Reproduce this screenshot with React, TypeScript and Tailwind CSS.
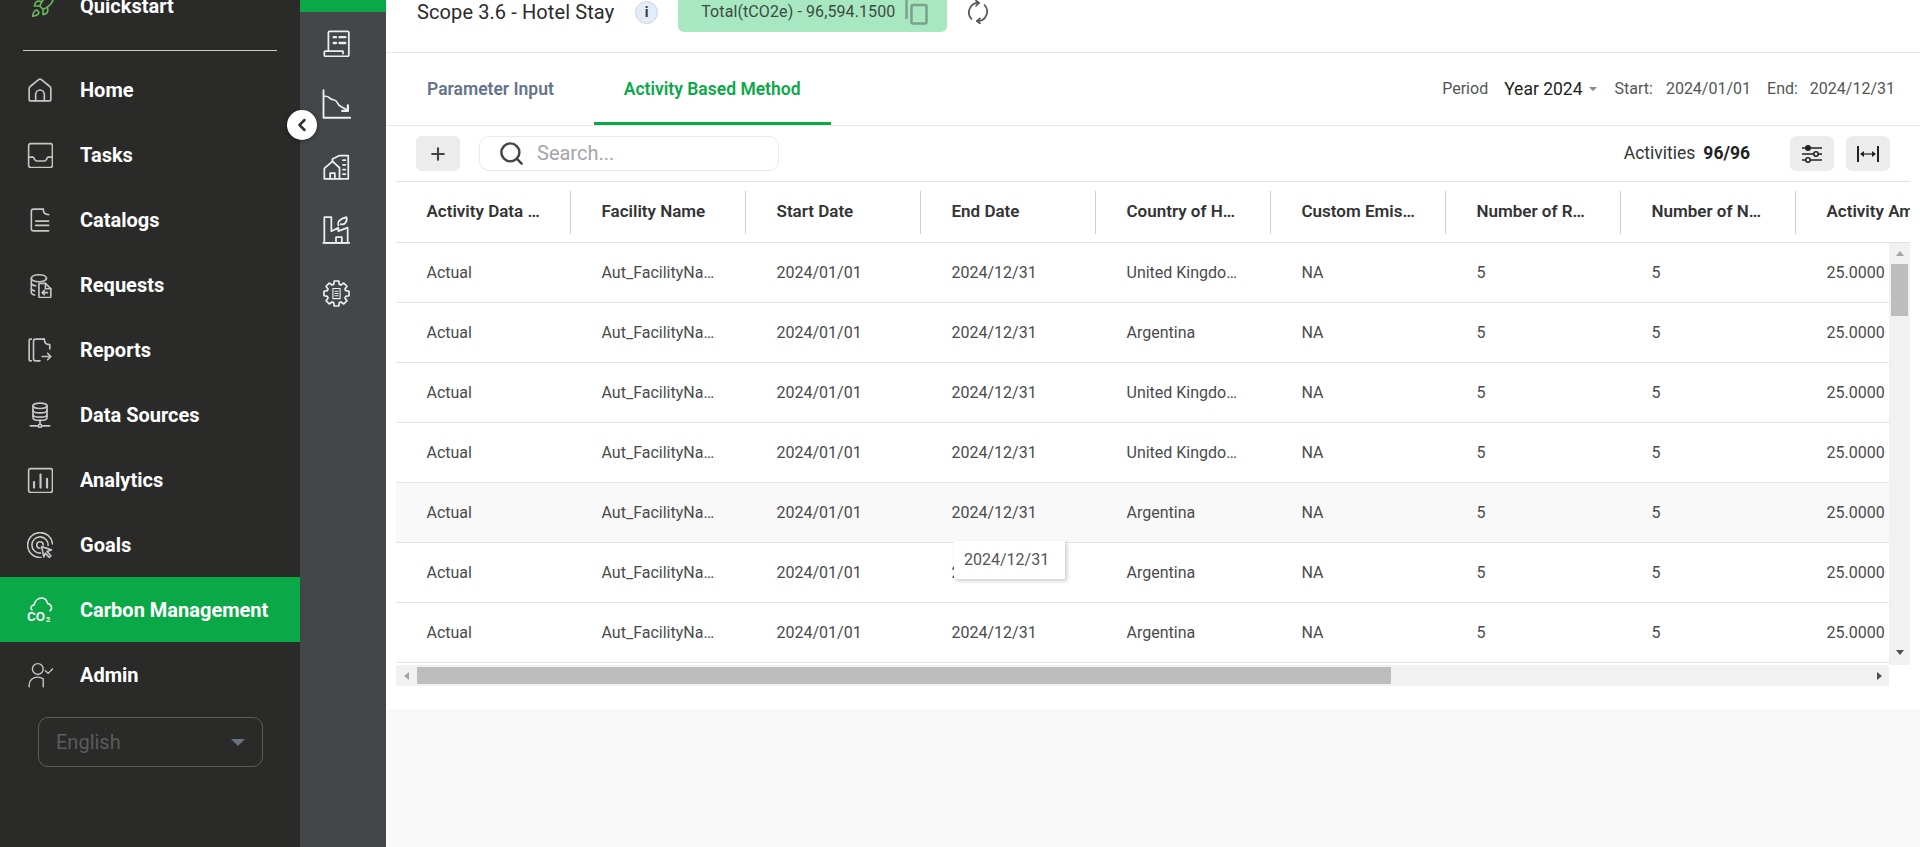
import React from 'react';
import { Rocket, Search, Plus } from 'lucide-react';

const Svg: React.FC<{ size?: number; children: React.ReactNode; sw?: number }> = ({ size = 26, children, sw = 1.5 }) => (
  <svg width={size} height={size} viewBox="0 0 24 24" fill="none" stroke="currentColor" strokeWidth={sw} strokeLinecap="round" strokeLinejoin="round">
    {children}
  </svg>
);

const HomeIcon = () => (
  <Svg><path d="M2 21V10.5c0-.6.3-1.1.7-1.5L11 2.3c.6-.4 1.4-.4 2 0L21.300 9c.4.4.7.9.7 1.500V21a1 1 0 0 1-1 1H3a1 1 0 0 1-1-1z" /><path d="M8 22v-6a4 4 0 0 1 8 0v6" /></Svg>
);
const TasksIcon = () => (
  <Svg><rect x="1.500" y="1.500" width="22" height="22" rx="2" /><path d="M1.500 14h4c.8 0 1 1 1.500 2s1 1.500 2 1.500h7c1 0 1.500-.5 2-1.500s.7-2 1.500-2h4" /></Svg>
);
const CatalogIcon = () => (
  <Svg><path d="M15 2H6a2 2 0 0 0-2 2v16a2 2 0 0 0 2 2h14" /><path d="M15 2c0 3 1.500 5 5 5" /><path d="M8 13h12M8 17h12" /></Svg>
);
const RequestsIcon = () => (
  <Svg>
    <path d="M4 6c0-2 3-3.500 7-3.500S18 4 18 6" /><path d="M4 6c0 1.500 3 3 7 3s7-1.500 7-3" /><path d="M4 6v13c0 1 1 1.700 3 2.300" /><path d="M4 11c1 1 2 1.500 4 1.800M4 16c1 .8 2 1.200 3 1.400" />
    <path d="M11 10.500h6l5 5v7a1 1 0 0 1-1 1h-9a1 1 0 0 1-1-1z" /><path d="M17 10.500v5h5M19 19h-5l2-2M14 19l2 2" />
  </Svg>
);
const ReportsIcon = () => (
  <Svg>
    <path d="M4 2H3a1 1 0 0 0-1 1v18a1 1 0 0 0 1 1h1" /><path d="M16 2H8a2 2 0 0 0-2 2v16a2 2 0 0 0 2 2h4" /><path d="M16 2c0 3 1.500 5 5 5v4" /><path d="M14 18h8M19 15l3 3-3 3" />
  </Svg>
);
const DataIcon = () => (
  <Svg>
    <ellipse cx="12" cy="3.500" rx="6.500" ry="2.500" /><path d="M5.500 3.500v11c0 1.500 3 2.500 6.500 2.500s6.500-1 6.500-2.500v-11" /><path d="M5.500 7.500c0 1.500 3 2.500 6.500 2.500s6.500-1 6.500-2.500M5.500 11.500c0 1.500 3 2.500 6.500 2.500s6.500-1 6.500-2.500" />
    <path d="M12 17v3M3 22h7M14 22h7" /><circle cx="12" cy="22" r="1.500" />
  </Svg>
);
const AnalyticsIcon = () => (
  <Svg><rect x="1.500" y="1.500" width="22" height="22" rx="2" /><path d="M6.500 19v-5M12.500 19V7M18.500 19v-8" strokeWidth={2} /></Svg>
);
const GoalsIcon = () => (
  <Svg>
    <path d="M13 23.500A11.500 11.500 0 1 1 23.500 11" /><path d="M12.500 19.500a7.500 7.500 0 1 1 7-7" /><path d="M12 15a3 3 0 1 1 3-3" />
    <path d="M13.500 13.500l9 3-4 1.500 3.500 4-1.500 1.500-3.500-4-1.500 3.500z" />
  </Svg>
);
const CarbonIcon = () => (
  <svg width="26" height="26" viewBox="0 0 26 26" fill="none" stroke="currentColor" strokeWidth="1.500" strokeLinecap="round" strokeLinejoin="round">
    <path d="M5 13c-2-1.500-1-4.500 2-5C8 4 11 1 14.500 1c3.500 0 5.500 2.500 6 5.500 2.500.3 4.500 2.500 4 5-.2 1-.7 1.700-1.500 2.300" />
    <text x="0" y="24" fill="currentColor" stroke="none" fontSize="13.500" fontWeight="600" fontFamily="Roboto, sans-serif">CO</text>
    <text x="19" y="25" fill="currentColor" stroke="none" fontSize="7.500" fontWeight="700" fontFamily="Roboto, sans-serif">2</text>
  </svg>
);
const AdminIcon = () => (
  <Svg sw={1.300}><circle cx="10" cy="6.500" r="5" /><path d="M2 23v-2c0-4 3.500-7 8-7 2 0 3.500.5 5 1.500v7.500" /><path d="M17 8l2.500 2.500L24 6" /></Svg>
);

const ScrollIcon = () => (
  <Svg size={28}><path d="M5.500 19V3a1 1 0 0 1 1-1H22a1 1 0 0 1 1 1v19a1.500 1.500 0 0 1-1.500 1.500H3.500A1.500 1.500 0 0 1 2 22v-2a1 1 0 0 1 1-1h15v2" /><path d="M10 7h2M15 7h5M10 12h2M15 12h5" strokeWidth={2} /></Svg>
);
const FallIcon = () => (
  <Svg size={30}><path d="M2 1v22h22" /><path d="M2 6c4-1 4 1 6 2s4 0 5 3 4 3 8 6" strokeWidth={1.300} /><path d="M17 17.500h4.500v-4.500" strokeWidth={1.800} /></Svg>
);
const BuildingIcon = () => (
  <Svg size={28}><path d="M2 23v-9l7-6 6 5.500V23z" /><path d="M7 23v-5h4v5M9 8V6l6-3h7.500v20H15M18 7h2M18 11h2M18 15h2M18 19h2" /></Svg>
);
const FactoryIcon = () => (
  <Svg size={28}><path d="M2 23V1h6v12l6-3v3l8-3v13z" /><path d="M1 23h23M12 23v-5h5v5" /><path d="M14 8c-1-4 3-6 7-7 1 4-2 7-5 6" /></Svg>
);

// eight-tooth cog outline, walked around the centre of a 24 box
const cogPath = (() => {
  const pts: string[] = [];
  for (let i = 0; i < 8; i++) {
    const a = (i * Math.PI) / 4;
    [[8.500, -0.300], [11.300, -0.180], [11.300, 0.180], [8.500, 0.300]].forEach(([r, d]) => {
      pts.push(`${(12 + r * Math.sin(a + d)).toFixed(2)} ${(12 - r * Math.cos(a + d)).toFixed(2)}`);
    });
  }
  return `M${pts.join('L')}Z`;
})();
const GearIcon = () => (
  <Svg size={27}>
    <path d={cogPath} />
    <rect x="8.800" y="7.500" width="6.400" height="9" strokeWidth={1} />
    <path d="M10.500 10h3M10.500 12h3M10.500 14h3" strokeWidth={1} />
  </Svg>
);

const navItems = [
  { label: 'Home', icon: HomeIcon },
  { label: 'Tasks', icon: TasksIcon },
  { label: 'Catalogs', icon: CatalogIcon },
  { label: 'Requests', icon: RequestsIcon },
  { label: 'Reports', icon: ReportsIcon },
  { label: 'Data Sources', icon: DataIcon },
  { label: 'Analytics', icon: AnalyticsIcon },
  { label: 'Goals', icon: GoalsIcon },
  { label: 'Carbon Management', icon: CarbonIcon, active: true },
  { label: 'Admin', icon: AdminIcon },
];

const columns = ['Activity Data …', 'Facility Name', 'Start Date', 'End Date', 'Country of H…', 'Custom Emis…', 'Number of R…', 'Number of N…', 'Activity Am'];
const countries = ['United Kingdo…', 'Argentina', 'United Kingdo…', 'United Kingdo…', 'Argentina', 'Argentina', 'Argentina'];

const App: React.FC = () => {
  return (
    <div className="flex h-screen w-full overflow-hidden bg-white font-['Roboto',sans-serif]">
      <aside className="relative w-[300px] shrink-0 bg-[#2a2a29] text-white">
        <div className="-mt-[27px]">
          <div className="flex h-[65px] items-center pl-[30px] text-[20px] font-bold">
            <span className="w-[50px] text-[#6cb65c]"><Rocket size={26} strokeWidth={1.500} /></span>
            Quickstart
          </div>
        </div>
        <div className="mx-[23px] mt-[12px] mb-[6px] h-px bg-[#c4cfc6]" />
        {navItems.map(item => {
          const Icon = item.icon;
          return (
            <div key={item.label} className={`flex h-[65px] items-center pl-[27px] text-[20px] font-bold ${item.active ? 'bg-[#0aa847] text-white' : 'text-white'}`}>
              <span className={`w-[53px] ${item.active ? 'text-white' : 'text-[#c6c6c6]'}`}><Icon /></span>
              {item.label}
            </div>
          );
        })}
        <div className="ml-[38px] mr-[37px] mt-[10px] flex h-[50px] items-center justify-between rounded-[10px] border border-[#5a5f5c] pl-[17px] pr-[17px] text-[20px] text-[#585d5d]">
          English
          <span className="h-0 w-0 border-x-[7px] border-t-[7px] border-x-transparent border-t-[#6b7280]" />
        </div>
        <button className="absolute left-[287px] top-[110px] z-10 flex h-[30px] w-[30px] items-center justify-center rounded-full bg-white text-[#333] shadow-[0_1px_4px_rgba(0,0,0,0.4)]">
          <svg width="12" height="14" viewBox="0 0 12 14" fill="none" stroke="currentColor" strokeWidth="2.500" strokeLinecap="round" strokeLinejoin="round"><path d="M8.500 2L3.500 7l5 5" /></svg>
        </button>
      </aside>

      <div className="flex w-[86px] shrink-0 flex-col items-center bg-[#43474a] pr-[14px] text-[#eeeeee]">
        <div className="-mr-[14px] h-[12px] w-[86px] shrink-0 bg-[#0aa847]" />
        <div className="mt-[17px] flex h-[28px] items-center"><ScrollIcon /></div>
        <div className="mt-[30px] flex h-[34px] items-center"><FallIcon /></div>
        <div className="mt-[31px] flex h-[28px] items-center"><BuildingIcon /></div>
        <div className="mt-[36px] flex h-[28px] items-center"><FactoryIcon /></div>
        <div className="mt-[36px] flex h-[26px] items-center"><GearIcon /></div>
      </div>

      <main className="flex min-w-0 flex-1 flex-col">
        <header className="flex h-[53px] shrink-0 items-start border-b border-[#e6e6e6] pl-[31px] text-[#2b2b2b]">
          <h1 className="flex h-[24px] items-center text-[20px] leading-none tracking-[0.1px]">Scope 3.6 - Hotel Stay</h1>
          <span className="ml-[21px] mt-[1px] flex h-[23px] w-[23px] items-center justify-center rounded-full border border-[#c9d4e8] bg-[#e4ecf8] text-[14px] font-bold text-[#334]">i</span>
          <div className="ml-[20px] flex h-[32px] w-[269px] items-start overflow-hidden rounded-b-[6px] bg-[#a7e8c1] pl-[23px]">
            <span className="flex h-[24px] items-center text-[16px] tracking-[0.1px] text-[#3e4a44]">Total(tCO2e) - 96,594.1500</span>
            <svg className="ml-[10px]" width="24" height="26" viewBox="0 0 24 26" fill="none" stroke="#7f9f8e" strokeWidth="2.500"><path d="M1.500 19V0" /><rect x="6.500" y="5" width="15" height="18.500" rx="1.500" /></svg>
          </div>
          <svg className="ml-[19px]" width="24" height="24" viewBox="0 0 24 24" fill="none" stroke="#555" strokeWidth="1.700" strokeLinecap="round" strokeLinejoin="round">
            <path d="M13 3A9.500 9.500 0 0 0 5.500 19" /><path d="M10 .5L13 3 10 6" /><path d="M11 21A9.500 9.500 0 0 0 18.500 5" /><path d="M14 18.500L11 21l3 2.500" />
          </svg>
        </header>

        <div className="flex h-[73px] shrink-0 items-stretch justify-between border-b border-[#e6e6e6] pl-[41px] pr-[25px]">
          <div className="flex items-stretch text-[17.500px] font-semibold">
            <div className="flex items-center pt-[1px] text-[#64748b]">Parameter Input</div>
            <div className="ml-[40px] flex items-center border-b-[3px] border-[#0aa847] px-[30px] pt-[4px] text-[#0aa847]">Activity Based Method</div>
          </div>
          <div className="flex items-center text-[16px] text-[#555]">
            <span>Period</span>
            <span className="ml-[16px] text-[17.500px] text-[#222]">Year 2024</span>
            <span className="ml-[6px] h-0 w-0 border-x-[4px] border-t-[4px] border-x-transparent border-t-[#888]" />
            <span className="ml-[18px]">Start:</span>
            <span className="ml-[13px]">2024/01/01</span>
            <span className="ml-[16px]">End:</span>
            <span className="ml-[12px]">2024/12/31</span>
          </div>
        </div>

        <div className="flex h-[55px] shrink-0 items-center pl-[30px] pr-[30px]">
          <button className="flex h-[35px] w-[44px] items-center justify-center rounded-[6px] bg-[#ececec] text-[#444]"><Plus size={20} strokeWidth={2.500} /></button>
          <div className="ml-[19px] flex h-[35px] w-[300px] items-center rounded-[10px] border border-[#e8e8ee] pl-[18px] text-[20px] text-[#a3a5aa]">
            <Search size={27} strokeWidth={2.200} className="text-[#444]" />
            <span className="ml-[12px] pb-[2px]">Search...</span>
          </div>
          <div className="ml-auto text-[17.500px] text-[#333]">Activities<span className="ml-[8px] font-bold text-[#222]">96/96</span></div>
          <button className="ml-[40px] flex h-[35px] w-[44px] items-center justify-center rounded-[6px] bg-[#ececec] text-[#222]">
            <svg width="22" height="20" viewBox="0 0 22 20" fill="none" stroke="currentColor" strokeWidth="1.500"><path d="M1 4h20M1 10h20M1 16h20" /><circle cx="7" cy="4" r="2.200" fill="#222" /><circle cx="15" cy="10" r="2.200" fill="#ececec" /><circle cx="7" cy="16" r="2.200" fill="#ececec" /></svg>
          </button>
          <button className="ml-[12px] flex h-[35px] w-[44px] items-center justify-center rounded-[6px] bg-[#ececec] text-[#222]">
            <svg width="24" height="20" viewBox="0 0 24 20" fill="none" stroke="currentColor" strokeWidth="2"><path d="M2 2v16M22 2v16" /><path d="M5 10h14" strokeWidth="1.200" /><path d="M8 7l-4 3 4 3zM16 7l4 3-4 3z" fill="currentColor" stroke="none" /></svg>
          </button>
        </div>

        <div className="ml-[10px] mr-[10px] shrink-0">
          <div className="flex h-[62px] overflow-hidden border-y border-[#e2e2e2] text-[17px] font-semibold text-[#333]">
            {columns.map((col, i) => (
              <div key={col} className="flex h-full w-[175px] shrink-0 items-center">
                <div className={`flex h-[43px] w-full items-center whitespace-nowrap pl-[30.500px] ${i < 8 ? 'border-r border-[#cfcfcf]' : ''}`}>{col}</div>
              </div>
            ))}
          </div>

          <div className="flex h-[422px]">
            <div className="relative min-w-0 flex-1 overflow-hidden">
              {countries.map((country, i) => (
                <div key={i} className={`flex h-[60px] items-center border-b border-[#e4e4e4] text-[16px] text-[#4a4a4a] ${i === 4 ? 'bg-[#f9f9f9]' : ''}`}>
                  {['Actual', 'Aut_FacilityNa…', '2024/01/01', '2024/12/31', country, 'NA', '5', '5', '25.0000'].map((v, j) => (
                    <div key={j} className="w-[175px] shrink-0 whitespace-nowrap pl-[30.500px]">{v}</div>
                  ))}
                </div>
              ))}
              <div className="absolute left-[558px] top-[298px] flex h-[38px] w-[111px] items-center bg-white pl-[10px] text-[16px] text-[#555] shadow-[2px_2px_4px_rgba(0,0,0,0.2)]">2024/12/31</div>
            </div>
            <div className="flex w-[21px] shrink-0 flex-col items-center bg-[#f1f1f1]">
              <span className="mt-[8px] h-0 w-0 border-x-[4px] border-b-[5px] border-x-transparent border-b-[#a3a3a3]" />
              <div className="mt-[8px] h-[52px] w-[17px] bg-[#bdbdbd]" />
              <span className="mt-auto mb-[10px] h-0 w-0 border-x-[4px] border-t-[5px] border-x-transparent border-t-[#505050]" />
            </div>
          </div>

          <div className="flex h-[21px] w-[1493px] items-center bg-[#f1f1f1]">
            <span className="ml-[8px] h-0 w-0 border-y-[4px] border-r-[5px] border-y-transparent border-r-[#a3a3a3]" />
            <div className="ml-[8px] h-[17px] w-[974px] bg-[#bdbdbd]" />
            <span className="ml-auto mr-[7px] h-0 w-0 border-y-[4px] border-l-[5px] border-y-transparent border-l-[#505050]" />
          </div>
        </div>

        <div className="mt-[23px] flex-1 bg-[#f9f9f9]" />
      </main>
    </div>
  );
};

export default App;
